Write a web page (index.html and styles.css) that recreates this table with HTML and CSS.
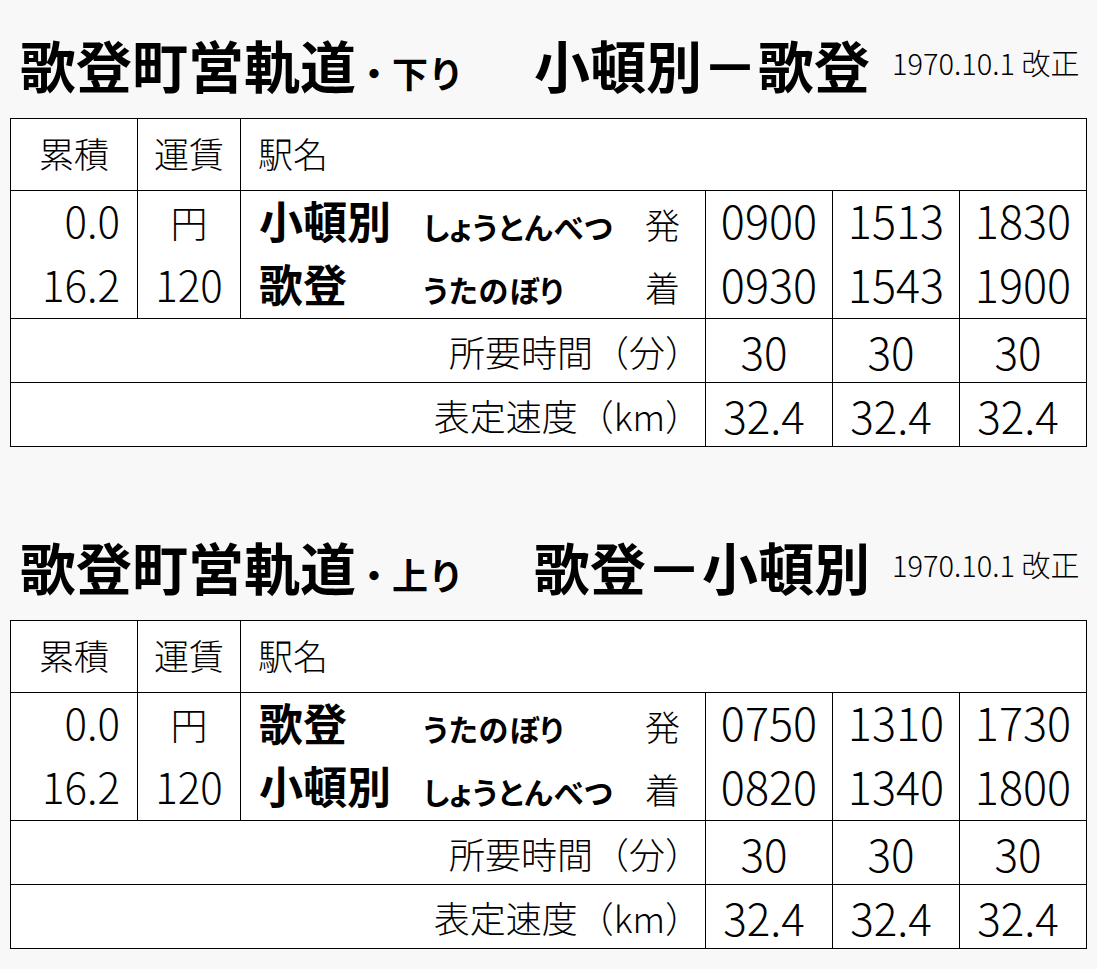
FILE: index.html
```html
<!DOCTYPE html>
<html lang="ja">
<head>
<meta charset="utf-8">
<title>歌登町営軌道 時刻表</title>
<link rel="stylesheet" href="styles.css">
</head>
<body>
<div class="page">
  <section class="section">
    <h1 class="title">
      <span class="line-name">歌登町営軌道</span>
      <span class="dir">・下り</span>
      <span class="route">小頓別－歌登</span>
      <span class="date">1970.10.1 改正</span>
    </h1>
    <table class="tt">
      <colgroup>
        <col class="c-km"><col class="c-fare"><col class="c-stn"><col class="c-time"><col class="c-time"><col>
      </colgroup>
      <tr class="head">
        <th class="h-c">累積</th>
        <th class="h-c">運賃</th>
        <th class="h-l" colspan="4">駅名</th>
      </tr>
      <tr class="stations">
        <td class="km"><div class="ln">0.0</div><div class="ln ln2">16.2</div></td>
        <td class="fare"><div class="ln"><span class="yen">円</span></div><div class="ln ln2">120</div></td>
        <td class="stn">
          <div class="ln stn-line"><span class="nm">小頓別</span><span class="kana">しょうとんべつ</span><span class="da">発</span></div>
          <div class="ln ln2 stn-line"><span class="nm">歌登</span><span class="kana">うたのぼり</span><span class="da">着</span></div>
        </td>
        <td class="time"><div class="ln">0900</div><div class="ln ln2">0930</div></td>
        <td class="time"><div class="ln">1513</div><div class="ln ln2">1543</div></td>
        <td class="time"><div class="ln">1830</div><div class="ln ln2">1900</div></td>
      </tr>
      <tr class="sum">
        <td class="label" colspan="3">所要時間（分）</td>
        <td class="val">30</td><td class="val">30</td><td class="val">30</td>
      </tr>
      <tr class="sum">
        <td class="label" colspan="3">表定速度（km）</td>
        <td class="val">32.4</td><td class="val">32.4</td><td class="val">32.4</td>
      </tr>
    </table>
  </section>

  <section class="section">
    <h1 class="title">
      <span class="line-name">歌登町営軌道</span>
      <span class="dir">・上り</span>
      <span class="route">歌登－小頓別</span>
      <span class="date">1970.10.1 改正</span>
    </h1>
    <table class="tt">
      <colgroup>
        <col class="c-km"><col class="c-fare"><col class="c-stn"><col class="c-time"><col class="c-time"><col>
      </colgroup>
      <tr class="head">
        <th class="h-c">累積</th>
        <th class="h-c">運賃</th>
        <th class="h-l" colspan="4">駅名</th>
      </tr>
      <tr class="stations">
        <td class="km"><div class="ln">0.0</div><div class="ln ln2">16.2</div></td>
        <td class="fare"><div class="ln"><span class="yen">円</span></div><div class="ln ln2">120</div></td>
        <td class="stn">
          <div class="ln stn-line"><span class="nm">歌登</span><span class="kana">うたのぼり</span><span class="da">発</span></div>
          <div class="ln ln2 stn-line"><span class="nm">小頓別</span><span class="kana">しょうとんべつ</span><span class="da">着</span></div>
        </td>
        <td class="time"><div class="ln">0750</div><div class="ln ln2">0820</div></td>
        <td class="time"><div class="ln">1310</div><div class="ln ln2">1340</div></td>
        <td class="time"><div class="ln">1730</div><div class="ln ln2">1800</div></td>
      </tr>
      <tr class="sum">
        <td class="label" colspan="3">所要時間（分）</td>
        <td class="val">30</td><td class="val">30</td><td class="val">30</td>
      </tr>
      <tr class="sum">
        <td class="label" colspan="3">表定速度（km）</td>
        <td class="val">32.4</td><td class="val">32.4</td><td class="val">32.4</td>
      </tr>
    </table>
  </section>
</div>
</body>
</html>
```

FILE: styles.css
```css
html, body {
  margin: 0;
  padding: 0;
  background: #f8f8f8;
}
body {
  font-family: "Noto Sans CJK JP", "Noto Sans", sans-serif;
  color: #000;
}
.page {
  padding: 0 10px;
}
.section {
  padding-top: 36px;
}
.section + .section {
  margin-top: 55px;
}
.title {
  margin: 0 0 26px 0;
  padding-left: 10px;
  display: flex;
  align-items: baseline;
  font-weight: 700;
  line-height: 1;
}
.line-name {
  font-size: 56px;
}
.dir {
  font-size: 36px;
}
.route {
  font-size: 56px;
  margin-left: 70px;
}
.date {
  font-size: 29px;
  font-weight: 300;
  margin-left: 22px;
  align-self: center;
  margin-bottom: 4px;
}

.tt {
  width: 100%;
  border-collapse: collapse;
  table-layout: fixed;
  background: #fff;
  font-weight: 300;
}
.tt th, .tt td {
  border: 1px solid #000;
  padding: 0;
  vertical-align: middle;
}
.c-km { width: 127px; }
.c-fare { width: 103px; }
.c-stn { width: 465px; }
.c-time { width: 127px; }

.tt .head th {
  height: 67px;
  padding-bottom: 4px;
  line-height: 50px;
  font-size: 35px;
  font-weight: 300;
}
.tt .h-c { text-align: center; }
.tt .h-l { text-align: left; padding-left: 17px; }

.ln {
  height: 64px;
  line-height: 58px;
}
.ln2 {
  height: 63px;
  line-height: 57px;
}
.tt .km {
  font-size: 42px;
  text-align: right;
  padding-right: 17px;
}
.tt .fare {
  font-size: 42px;
  text-align: center;
}
.yen {
  font-size: 37px;
}
.tt .stn {
  padding: 0 25px 0 18px;
}
.stn-line {
  display: flex;
  align-items: baseline;
}
.nm {
  width: 164px;
  font-size: 44px;
  font-weight: 700;
}
.kana {
  flex: 1;
  font-size: 30px;
  font-weight: 700;
  font-feature-settings: "palt";
  letter-spacing: 1px;
}
.da {
  font-size: 35px;
}
.tt .time {
  font-size: 45px;
  text-align: center;
}
.tt .sum td {
  height: 63px;
  line-height: 56px;
  padding-bottom: 0;
}
.tt .label {
  font-size: 36px;
  text-align: right;
  padding-right: 4px;
}
.tt .val {
  font-size: 44px;
  text-align: center;
  padding-right: 10px;
}
```
